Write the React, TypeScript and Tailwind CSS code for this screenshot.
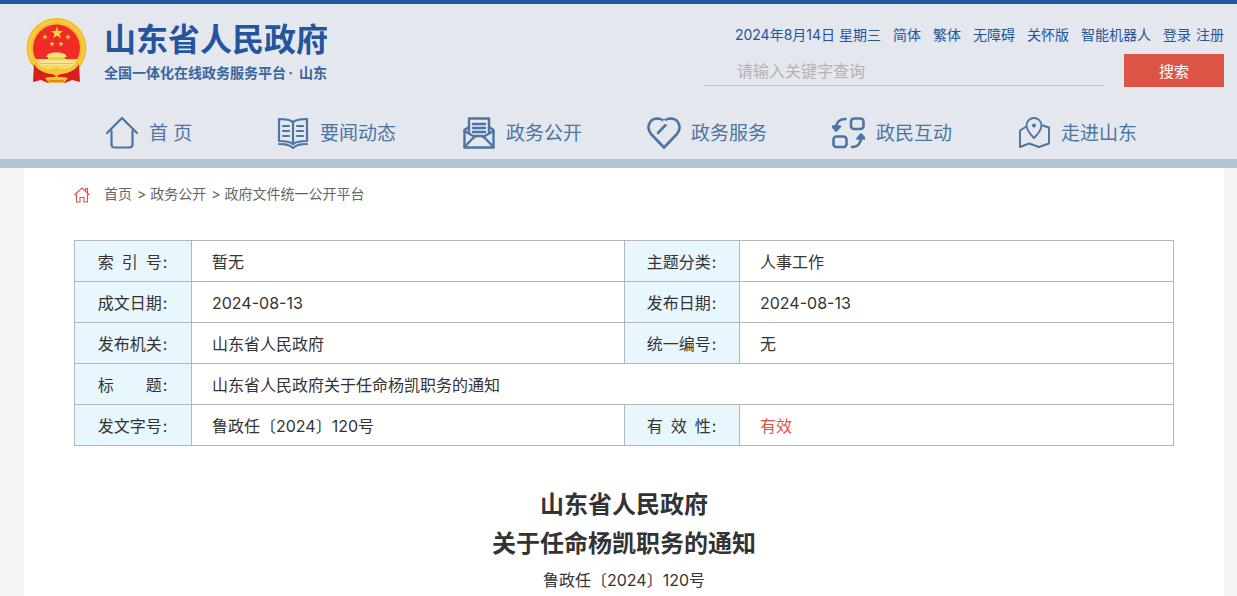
import React from "react";

const cjk = { fontFamily: 'Inter, "Noto Sans CJK SC", "Liberation Sans", sans-serif' };

function Emblem() {
  const star = (cx: number, cy: number, r: number) => {
    const pts: string[] = [];
    for (let i = 0; i < 10; i++) {
      const rr = i % 2 === 0 ? r : r * 0.4;
      const a = (-90 + i * 36) * (Math.PI / 180);
      pts.push(`${(cx + rr * Math.cos(a)).toFixed(2)},${(cy + rr * Math.sin(a)).toFixed(2)}`);
    }
    return <polygon points={pts.join(" ")} fill="#f8d53e" />;
  };
  return (
    <svg width="62" height="66" viewBox="0 0 62 66">
      <circle cx="30.5" cy="30" r="30" fill="#f3bf30" />
      <circle cx="30.5" cy="30" r="27" fill="none" stroke="#f8d04a" strokeWidth="1.5" />
      <circle cx="30.5" cy="30" r="23.5" fill="#ee2c25" />
      <path d="M9 41 H52 C49 49 41 53 30.5 53 C20 53 12 49 9 41Z" fill="#f8d866" />
      <path d="M22 36 Q30.5 32.5 39 36 L41 39 H20Z" fill="#f9e07a" />
      <rect x="22" y="39" width="17" height="3" fill="#f6cc46" />
      <rect x="14" y="42" width="33" height="5" fill="#fbe58a" />
      <rect x="14" y="45" width="33" height="1" fill="#f2bf3a" />
      {star(31, 15, 6.5)}
      {star(19, 19, 2.9)}
      {star(42, 19, 2.9)}
      {star(26, 26, 2.9)}
      {star(35, 26, 2.9)}
      <path d="M8 46 C10 50 14 53 20 55 L30.5 56 L28 65 L22 65 L15 62 L7 64 Z" fill="#d91f1c" />
      <path d="M53 46 C51 50 47 53 41 55 L30.5 56 L33 65 L39 65 L46 62 L54 64 Z" fill="#d91f1c" />
      <path d="M16 52 C21 50 26 52 30.5 49 C35 52 40 50 45 52 C42 56 36 55 30.5 58 C25 55 19 56 16 52Z" fill="#f5c936" />
      <path d="M19 60 C24 58 27 60 30.5 58 C34 60 37 58 42 60 L38 65 H23Z" fill="#f3c233" />
      <path d="M23 63 H38" stroke="#d91f1c" strokeWidth="0.8" />
    </svg>
  );
}

const S = { fill: "none", stroke: "#4a75a5", strokeWidth: 2.2, strokeLinecap: "round" as const, strokeLinejoin: "round" as const };

function HomeIcon() {
  return (
    <svg width="34" height="34" viewBox="0 0 34 34" {...S}>
      <path d="M2 17 L17 2 L32 17" />
      <path d="M6.5 15 V28.5 Q6.5 31.5 9.5 31.5 H24.5 Q27.5 31.5 27.5 28.5 V15" />
    </svg>
  );
}
function BookIcon() {
  return (
    <svg width="32" height="32" viewBox="0 0 32 32" {...S}>
      <path d="M16 5 C12 2 6 2 2 2 V24 C6 24 12 24 16 27 C20 24 26 24 30 24 V2 C26 2 20 2 16 5Z" />
      <path d="M16 5 V27" />
      <path d="M2 27 C7 27 12 27 16 31 C20 27 25 27 30 27" />
      <path d="M6 9 H12 M6 14 H12 M6 19 H12 M20 9 H26 M20 14 H26 M20 19 H26" />
    </svg>
  );
}
function MailIcon() {
  return (
    <svg width="32" height="32" viewBox="0 0 32 32" fill="none" stroke="#4a75a5" strokeWidth="2.4" strokeLinejoin="round" strokeLinecap="round">
      <path d="M1.5 13 V30.5 H30.5 V13 L26 10 M6 10 L1.5 13" />
      <path d="M6 16 V1.5 H26 V16" />
      <path d="M1.5 30 L12 19 H20 L30.5 30 M1.5 14 L12 20 M30.5 14 L20 20" />
      <path d="M10 7 H22 M10 11 H22 M10 15 H22" />
    </svg>
  );
}
function HeartIcon() {
  return (
    <svg width="34" height="32" viewBox="0 0 34 32" {...S} strokeWidth="2.6">
      <path d="M17 30.5 L4 17 C-1 11 2 2 10 1.5 C14 1.5 16 3 17 4.5 C18 3 20 1.5 24 1.5 C32 2 35 11 30 17 Z" />
      <path d="M11 16 L20 6.5" />
      <path d="M17 4.5 L20 6.5" stroke="#e4e7ed" strokeWidth="3" />
    </svg>
  );
}
function SwapIcon() {
  return (
    <svg width="33" height="32" viewBox="0 0 33 32" fill="none" stroke="#4a75a5" strokeWidth="2.6" strokeLinecap="round" strokeLinejoin="round">
      <rect x="19" y="1.5" width="12.5" height="10.5" rx="3" />
      <rect x="1.5" y="19.5" width="13" height="10.5" rx="3" />
      <path d="M13.5 2 C7 2 4 6 4 11" />
      <path d="M0.8 9.5 L4 13.5 L7.8 9.5Z" fill="#4a75a5" />
      <path d="M20 30 C26 30 29 26 29 20" />
      <path d="M25.5 21.5 L29 17.5 L32.5 21.5Z" fill="#4a75a5" />
    </svg>
  );
}
function MapIcon() {
  return (
    <svg width="32" height="32" viewBox="0 0 32 32" fill="none" stroke="#4a75a5" strokeWidth="1.9" strokeLinecap="round" strokeLinejoin="round">
      <path d="M15 21 C11 17 7.5 13 7.5 8.5 C7.5 4 11 1 15 1 C19 1 22.5 4 22.5 8.5 C22.5 13 19 17 15 21Z" />
      <circle cx="15" cy="8.5" r="2" fill="#4a75a5" stroke="none" />
      <path d="M6.5 10 L1 13.5 V30 L10 26.5 L20 30 L30 26.5 V10.5 L24 8.5" />
    </svg>
  );
}

const navItems = [
  { icon: <HomeIcon />, label: "首 页", w: "w-[172px]", gap: "gap-[10px]" },
  { icon: <BookIcon />, label: "要闻动态", w: "w-[186px]", gap: "gap-[11px]" },
  { icon: <MailIcon />, label: "政务公开", w: "w-[184px]", gap: "gap-[11px]" },
  { icon: <HeartIcon />, label: "政务服务", w: "w-[185px]", gap: "gap-[10px]" },
  { icon: <SwapIcon />, label: "政民互动", w: "w-[187px]", gap: "gap-[11px]" },
  { icon: <MapIcon />, label: "走进山东", w: "w-[150px]", gap: "gap-[10px]" },
];

const topLinks = ["简体", "繁体", "无障碍", "关怀版", "智能机器人"];

function Label({ children }: { children: React.ReactNode }) {
  return (
    <td className="border border-[#b5b5b5] bg-[#e8f6fe] py-0 pl-0 pr-[1px] pt-[2px] text-center align-middle text-[#333333]">
      {children}
      <span className="ml-[1px]">:</span>
    </td>
  );
}
function Val({ children, span, red }: { children: React.ReactNode; span?: number; red?: boolean }) {
  return (
    <td colSpan={span} className={`border border-[#b5b5b5] bg-white pt-[2px] pb-0 pl-[20px] pr-0 align-middle ${red ? "text-[#e0503f]" : "text-[#333333]"}`}>
      {children}
    </td>
  );
}

export default function App() {
  return (
    <div className="h-[596px] overflow-hidden bg-[#f5f5f7]" style={cjk}>
      <header className="h-[168px] border-t-4 border-b-[9px] border-t-[#24559c] border-b-[#b6c5d6] bg-[#e4e7ed]">
        <div className="flex h-[94px] items-start justify-between pl-[26px] pr-[13px]">
          <div className="flex items-start pt-[14px]">
            <Emblem />
            <div className="ml-[16px] pt-[2px]">
              <div className="text-[32px] leading-[40px] font-bold text-[#24559c]">山东省人民政府</div>
              <div className="mt-[3px] text-[14px] leading-[20px] font-bold text-[#3a659f]">
                全国一体化在线政务服务平台<span className="ml-[1px] mr-[5px] inline-block w-[7px] text-center">·</span>山东
              </div>
            </div>
          </div>
          <div className="flex w-[520px] flex-col items-end pt-[20px]">
            <div className="flex items-center text-[14px] leading-[22px] text-[#24559c]">
              <span>2024年8月14日 星期三</span>
              {topLinks.map((t) => (
                <span key={t} className="ml-[12px]">{t}</span>
              ))}
              <span className="ml-[12px]">登录</span>
              <span className="ml-[5px]">注册</span>
            </div>
            <div className="mt-[8px] flex w-full items-start justify-between">
              <div className="h-[32px] w-[400px] border-b border-[#bcc4d2] pl-[33px] pt-[2px] text-[16px] leading-[30px] text-[#b3b3b3]">请输入关键字查询</div>
              <button className="h-[33px] w-[100px] bg-[#dc5445] pt-[3px] text-[15px] text-white">搜索</button>
            </div>
          </div>
        </div>
        <nav className="flex h-[61px] items-start pl-[105px] pt-[16px]">
          {navItems.map((n) => (
            <div key={n.label} className={`flex h-[38px] items-center ${n.w} ${n.gap} text-[19px] text-[#4a75a5]`}>
              {n.icon}
              <span className="pt-[2px]">{n.label}</span>
            </div>
          ))}
        </nav>
      </header>
      <main className="mx-[24px] h-[428px] w-[1200px] bg-white px-[50px]">
        <div className="flex h-[72px] items-start pt-[16px] text-[14px] leading-[20px] text-[#666666]">
          <svg width="16" height="16" viewBox="0 0 16 16" fill="none" stroke="#dc5445" strokeWidth="1.1" className="mt-[3px]">
            <path d="M0.5 8 L8 1 L15.5 8 M2.5 7 V15 H6 V10.5 H10 V15 H13.5 V7 M11.5 4 V1.5 H13.5 V6" />
          </svg>
          <span className="ml-[14px]">首页</span>
          <span className="ml-[5px] mr-[4px]">&gt;</span>
          <span>政务公开</span>
          <span className="ml-[5px] mr-[4px]">&gt;</span>
          <span>政府文件统一公开平台</span>
        </div>
        <table className="w-[1099px] table-fixed border-collapse text-[16px]">
          <colgroup>
            <col className="w-[117px]" />
            <col className="w-[433px]" />
            <col className="w-[115px]" />
            <col className="w-[434px]" />
          </colgroup>
          <tbody>
            <tr className="h-[41px]">
              <Label>索{"\u2002"}引{"\u2002"}号</Label><Val>暂无</Val><Label>主题分类</Label><Val>人事工作</Val>
            </tr>
            <tr className="h-[41px]">
              <Label>成文日期</Label><Val>2024-08-13</Val><Label>发布日期</Label><Val>2024-08-13</Val>
            </tr>
            <tr className="h-[41px]">
              <Label>发布机关</Label><Val>山东省人民政府</Val><Label>统一编号</Label><Val>无</Val>
            </tr>
            <tr className="h-[41px]">
              <Label>标　　题</Label><Val span={3}>山东省人民政府关于任命杨凯职务的通知</Val>
            </tr>
            <tr className="h-[41px]">
              <Label>发文字号</Label><Val>鲁政任〔2024〕120号</Val><Label>有{"\u2002"}效{"\u2002"}性</Label><Val red>有效</Val>
            </tr>
          </tbody>
        </table>
        <div className="mt-[39px] text-center text-[#333333]">
          <h1 className="text-[24px] leading-[39px] font-bold">山东省人民政府</h1>
          <h1 className="text-[24px] leading-[39px] font-bold">关于任命杨凯职务的通知</h1>
          <p className="mt-[3px] text-[16px] leading-[28px]">鲁政任〔2024〕120号</p>
        </div>
      </main>
    </div>
  );
}
